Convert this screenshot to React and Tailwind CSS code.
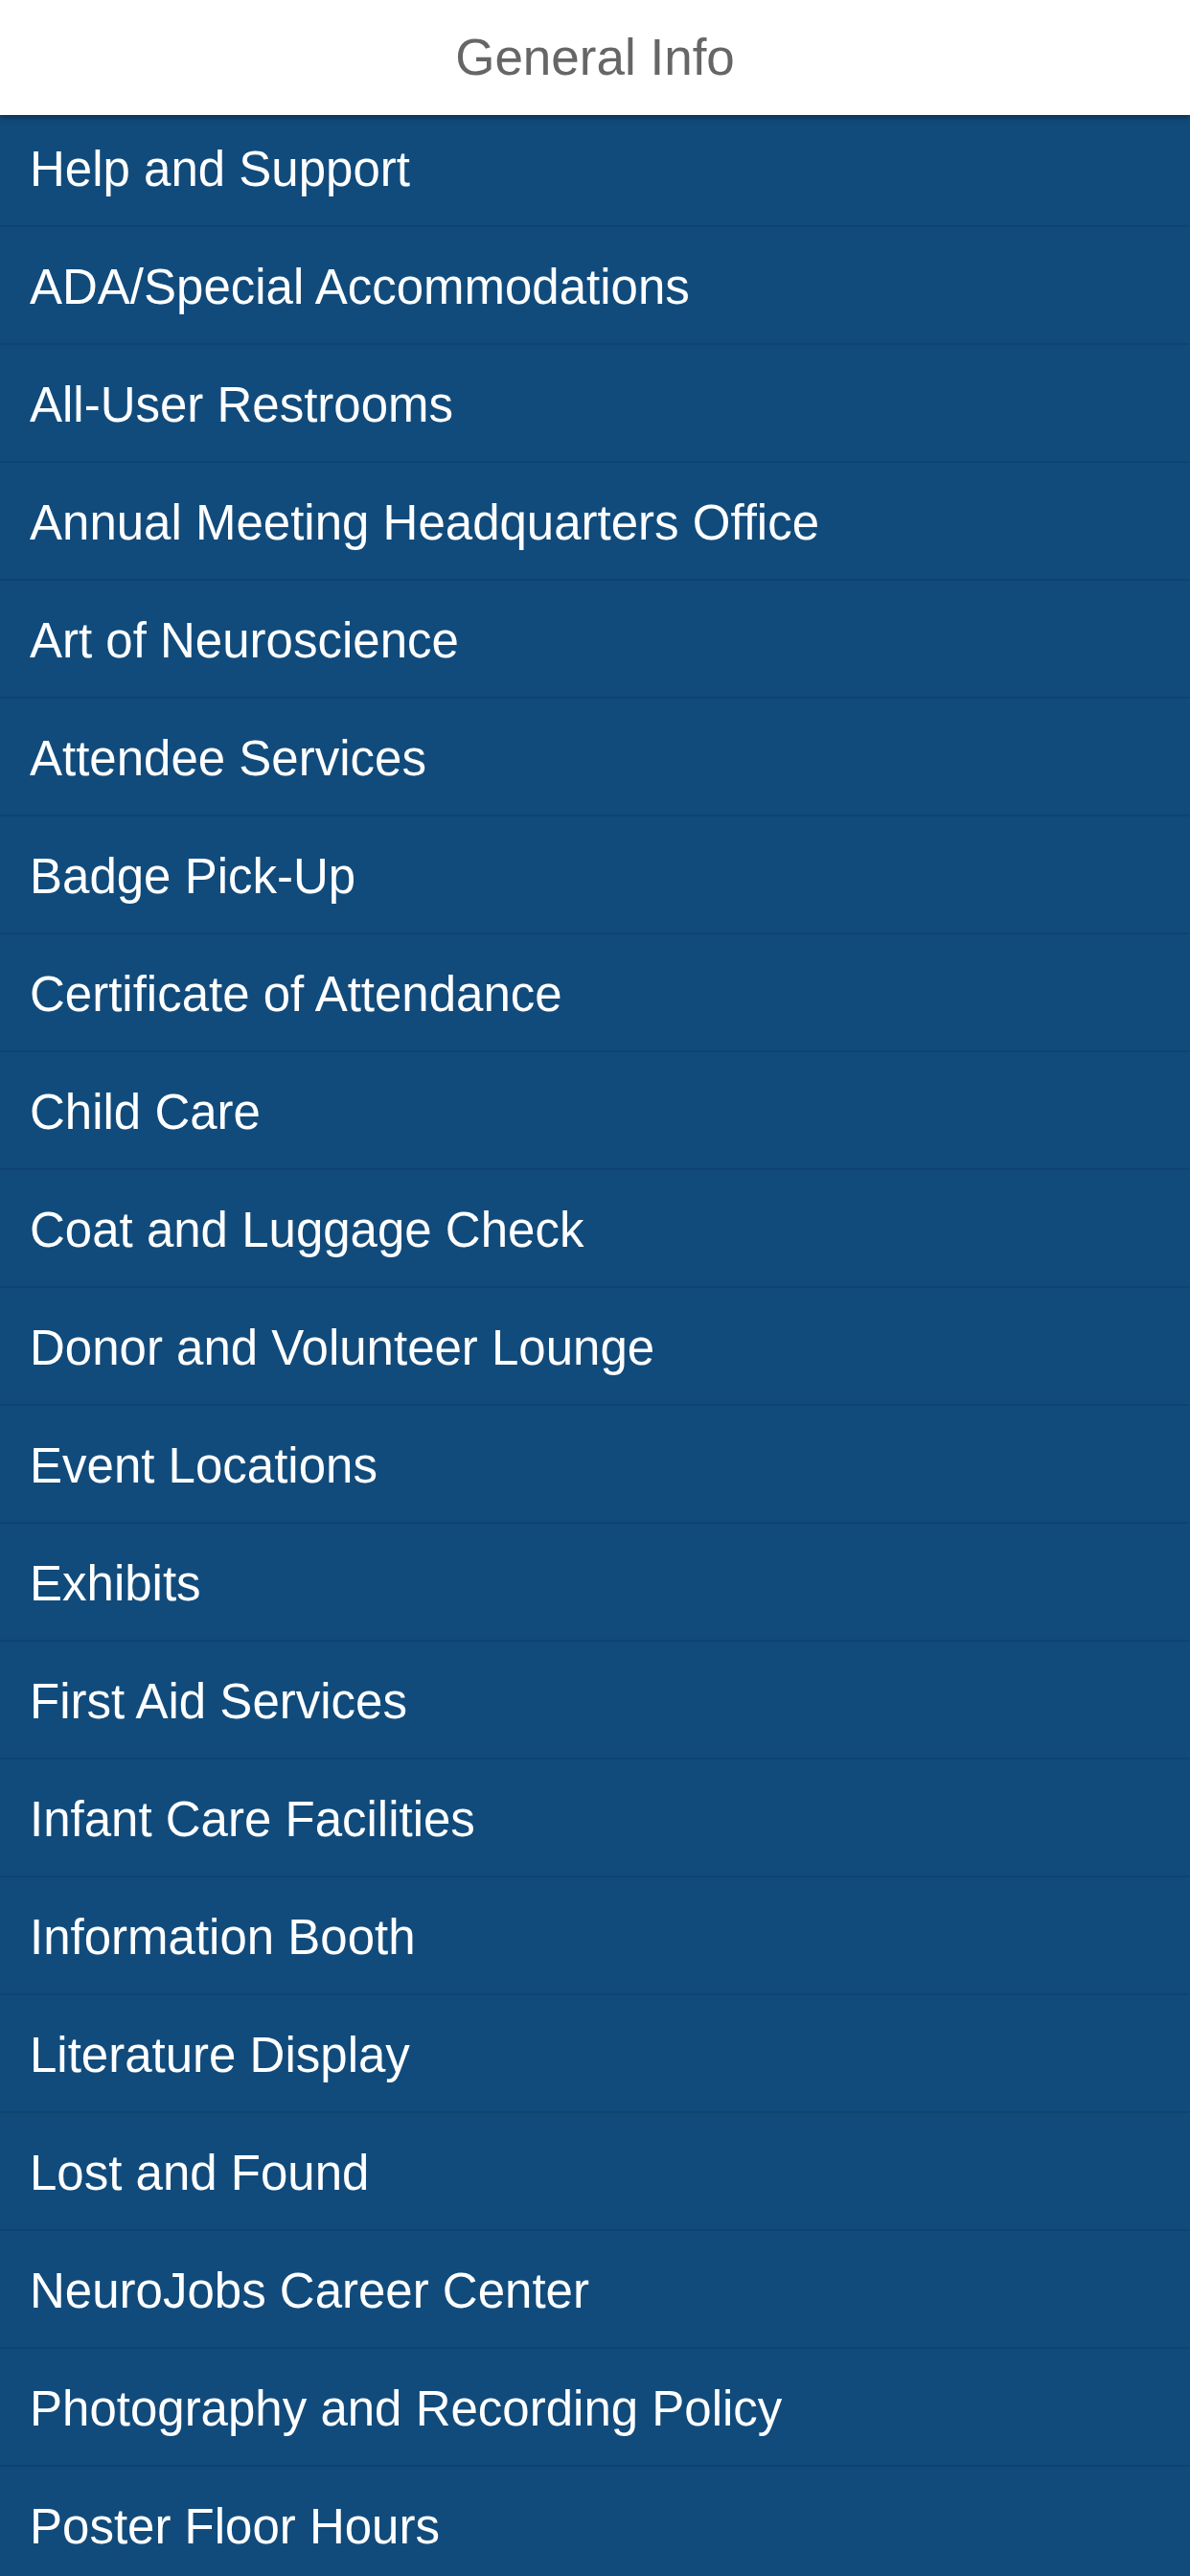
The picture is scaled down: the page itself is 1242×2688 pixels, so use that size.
import React from 'react';

const items = [
  'Help and Support',
  'ADA/Special Accommodations',
  'All-User Restrooms',
  'Annual Meeting Headquarters Office',
  'Art of Neuroscience',
  'Attendee Services',
  'Badge Pick-Up',
  'Certificate of Attendance',
  'Child Care',
  'Coat and Luggage Check',
  'Donor and Volunteer Lounge',
  'Event Locations',
  'Exhibits',
  'First Aid Services',
  'Infant Care Facilities',
  'Information Booth',
  'Literature Display',
  'Lost and Found',
  'NeuroJobs Career Center',
  'Photography and Recording Policy',
  'Poster Floor Hours',
];

const Row = ({ label }) => (
  <div className="h-[123px] shrink-0 flex items-center px-[31px] pt-[4px] bg-[#114b7c] border-b-2 border-[#0d4471]">
    <span className="text-white text-[51px] leading-[1.2] whitespace-nowrap">{label}</span>
  </div>
);

export default function App() {
  return (
    <div
      className="w-[1242px] h-[2688px] overflow-hidden bg-[#114b7c] flex flex-col"
      style={{ fontFamily: '"Liberation Sans", Arial, sans-serif' }}
    >
      <div className="relative z-10 h-[120px] shrink-0 bg-white flex items-center justify-center shadow-[0_3px_6px_rgba(0,0,0,0.35)]">
        <h1 className="text-[53px] leading-[1.2] text-[#666666] font-normal">General Info</h1>
      </div>
      <div className="-mt-[6px] flex flex-col">
        {items.map((label) => (
          <Row key={label} label={label} />
        ))}
      </div>
    </div>
  );
}
